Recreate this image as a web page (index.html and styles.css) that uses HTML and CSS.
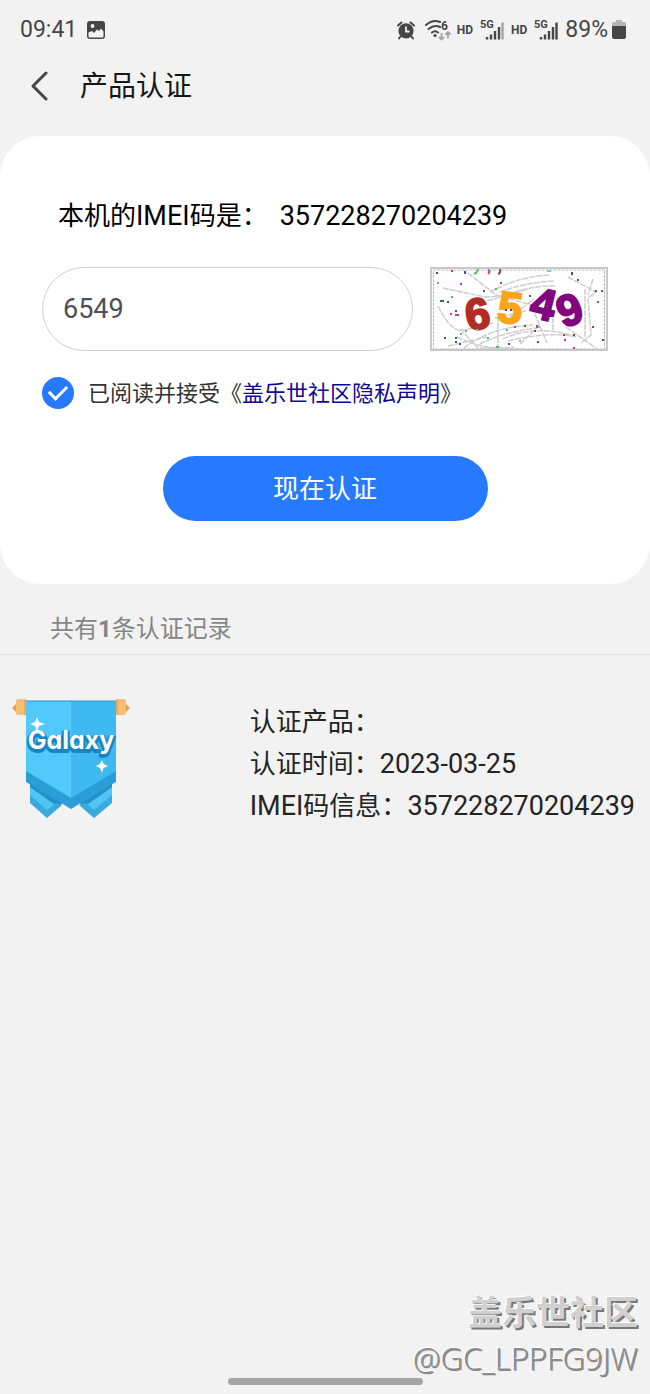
FILE: index.html
```html
<!DOCTYPE html>
<html lang="zh-CN">
<head>
<meta charset="utf-8">
<meta name="viewport" content="width=device-width, initial-scale=1">
<title>产品认证</title>
<link rel="stylesheet" href="styles.css">
</head>
<body>
<div class="status">
  <time class="status-text">09:41</time>
  <svg class="gallery" width="20" height="20" viewBox="0 0 20 20" aria-hidden="true"><rect x="1" y="1" width="18" height="18" rx="3" fill="#464646"/><path d="M2.500 12.500 6 11l2 2 3-3.500 2 1.500 2-2.500 2.500 3V16q0 1.500-1.500 1.500H4Q2.500 17.500 2.500 16Z" fill="#f2f2f2"/><circle cx="6.500" cy="6" r="1.900" fill="#f2f2f2"/></svg>
  <div class="status-icons">
    <svg width="20" height="20" viewBox="0 0 20 20" aria-hidden="true"><g fill="none" stroke="#464646" stroke-width="2" stroke-linecap="round"><path d="M2 5.500 5.500 2.500M18 5.500 14.500 2.500M4.500 16.500 3 18.500M15.500 16.500 17 18.500"/></g><circle cx="10" cy="10.800" r="7.600" fill="#464646"/><path d="M10 6.500V11.500H13.500" fill="none" stroke="#f2f2f2" stroke-width="1.800"/></svg>
    <svg class="wifi" width="28" height="24" viewBox="0 0 28 24" aria-hidden="true"><g fill="none" stroke="#464646" stroke-width="2" stroke-linecap="round"><path d="M2 7Q9 1 16 4M4.500 11Q10 6.500 16 9M8 14.500Q11 12 14 14.500"/></g><circle cx="11" cy="17.500" r="1.600" fill="#464646"/><text x="17" y="12" class="wifi-number">6</text><path d="M17.500 15V21.500M15 19l2.500 2.500L20 19M24 20.500V14M21.500 16.500 24 14l2.500 2.500" fill="none" stroke="#a5a5a5" stroke-width="1.800"/></svg>
    <span class="hd">HD</span>
    <svg width="24" height="22" viewBox="0 0 24 22" aria-hidden="true"><text x="0" y="9" class="net">5G</text><path d="M7 18v2.500M11 15.500v5M15 12v8.500M19 8v12.500" stroke="#464646" stroke-width="2.400"/><path d="M22.500 3.500v17" stroke="#a5a5a5" stroke-width="2.400"/></svg>
    <span class="hd">HD</span>
    <svg width="24" height="22" viewBox="0 0 24 22" aria-hidden="true"><text x="0" y="9" class="net">5G</text><path d="M7 18v2.500M11 15.500v5M15 12v8.500M19 8v12.500M22.500 3.500v17" stroke="#464646" stroke-width="2.400"/></svg>
    <span class="status-text">89%</span>
    <svg class="battery" width="14" height="20" viewBox="0 0 14 20" aria-hidden="true"><path d="M4 0h6v2h2q2 0 2 2v3H0V4q0-2 2-2h2Z" fill="#b4b4b4"/><path d="M0 6h14v11q0 2-2 2H2q-2 0-2-2Z" fill="#464646"/></svg>
  </div>
</div>

<header class="header">
  <button class="back" type="button" aria-label="返回"><svg width="20" height="32" viewBox="0 0 20 32" aria-hidden="true"><path d="M16 2 3 15 16 28" fill="none" stroke="#464646" stroke-width="3" stroke-linecap="round" stroke-linejoin="round"/></svg></button>
  <h1 class="title">产品认证</h1>
</header>

<main>
  <form class="card">
    <p class="imei"><span>本机的<span class="latin">IMEI</span>码是：</span><span class="latin">357228270204239</span></p>
    <div class="code-row">
      <input class="code" type="text" value="6549" aria-label="验证码">
      <svg class="captcha" width="178" height="84" viewBox="0 0 178 84" role="img" aria-label="验证码图片">
        <rect x="1" y="1" width="176" height="82" fill="#fff" stroke="#c8c8c8" stroke-width="2"/>
        <rect x="3.500" y="3" width="171" height="79" fill="none" stroke="#bcbcbc" stroke-dasharray="3 1"/>
        <g fill="none" stroke="#cdcdcd" stroke-width="1.500" stroke-dasharray="6 1">
          <path d="M13 21 55 30 92 28M38 6 66 28 109 40M60 25Q90 9 120 8M70 25Q97 15 124 14M78 27Q105 18 125 19M8 39Q18 60 30 64L63 56M30 62 48 81 94 82M27 70Q55 84 84 80M34 81Q60 60 103 58M50 77Q71 66 105 61M73 72Q104 57 145 69M78 74Q118 64 147 70M138 10 166 25 158 31 161 68 151 76M163 12 158 28M155 22V70M102 40 117 76M123 50V63M90 77 110 58M65 51 96 44M68 49V79M57 34 98 22M136 60 167 82M80 50 104 32M18 79 57 70"/>
        </g>
        <g class="captcha-digits"><text x="35" y="62" fill="#b22d25" stroke="#b22d25" transform="rotate(-10 48 46)">6</text><text x="68" y="56" fill="#faa41a" stroke="#faa41a" transform="rotate(7 80 40)">5</text><text x="101" y="52" fill="#82057f" stroke="#82057f" transform="rotate(14 112 38)">4</text><text x="127" y="58" fill="#82057f" stroke="#82057f" transform="rotate(-20 139 42)">9</text></g>
        <g fill="none" stroke-width="2">
          <path d="M6 6h2M10 34h4M17 35h2M25 44h2M14 71h2M25 71h2M25 75h2M29 77h2M107 75h2M142 5v3M35 4v3M99 29h2M116 39h2M78 77h2M172 73h2M105 63v2M75 43h2M80 43h2" stroke="#39558c"/>
          <path d="M21 4h2M30 17h2M70 16h2M58 3q3 1 0 4M20 47h2M25 48h4M84 60h2M134 73h2M143 81h2M167 35h2M107 58v3" stroke="#c53aa0"/>
          <path d="M7 16h2M21 30h2M65 22h2M30 67h2M44 7q4-2 4-5M35 64h2M66 80h3M76 63h2M57 71h2" stroke="#5bb86b"/>
          <path d="M68 7q3-1 2-5M147 13h2M165 24h2M171 24h2M94 59h2M53 24h2M162 60h2M133 68h2M143 68h2" stroke="#865047"/>
          <path d="M117 4h4M46 63h2M89 74h2M108 60h2" stroke="#73c7de"/>
        </g>
      </svg>
    </div>
    <div class="agreement"><input class="check" type="checkbox" id="agree" checked><label for="agree">已阅读并接受《<a class="privacy" href="#">盖乐世社区隐私声明</a>》</label></div>
    <button class="submit" type="button">现在认证</button>
  </form>

  <section class="records">
    <h2 class="records-title">共有<b class="count">1</b>条认证记录</h2>
    <article class="record">
      <svg class="badge" width="118" height="124" viewBox="0 0 118 124" role="img" aria-label="Galaxy">
        <path d="M0 11 6 5V17ZM118 11 112 5V17Z" fill="#e99e4d"/><path d="M5 2h9v16H5l-1-2V4ZM104 2h9l1 2v12l-1 2h-9Z" fill="#f7bd72"/><path d="M13 3v15M105 3v15" stroke="#e3a45c" stroke-width="1.500"/>
        <path d="M18 82H50V107L35 120 18 105ZM100 82H68V107L82 120 100 105Z" fill="#4fc5f5"/>
        <path d="M18 85 50 106 46 110 18 90ZM100 85 68 106 72 110 100 90Z" fill="#258fc8"/>
        <path d="M18 98 35 113 44 106 50 108 35 121 18 106ZM100 98 82 113 74 106 67 108 82 121 100 106Z" fill="#38aadd"/>
        <path d="M14 4h45v98L14 78Z" fill="#51c9fb"/><path d="M59 4h45v74L59 102Z" fill="#40b8f0"/>
        <path d="M14 74 59 101v11L14 85ZM104 74 59 101v11l45-27Z" fill="#2c9ed7"/><path d="M14 4h90" stroke="#2895cb"/>
        <text x="59" y="54" text-anchor="middle" class="badge-text shade">Galaxy</text><text x="59" y="52" text-anchor="middle" class="badge-text">Galaxy</text>
        <path d="m25 20 2 5 6 2-6 2-2 6-2-6-5-2 5-2ZM90 63l1.500 4 4.500 2-4.500 2-1.500 5-2-5-4-2 4-2Z" fill="#fff"/>
      </svg>
      <div class="details"><p>认证产品：</p><p>认证时间：<span class="latin">2023-03-25</span></p><p><span class="latin">IMEI</span>码信息：<span class="latin">357228270204239</span></p></div>
    </article>
  </section>
</main>

<div class="watermark"><span class="community">盖乐世社区</span><span class="user">@GC_LPPFG9JW</span></div>
<div class="home-bar"></div>
</body>
</html>
```

FILE: styles.css
```css
* { box-sizing: border-box; }
body {
  margin: 0;
  min-height: 100vh;
  display: flex;
  flex-direction: column;
  position: relative;
  background: #f2f2f2;
  color: #242424;
  font-family: Roboto, "Noto Sans CJK SC", sans-serif;
  font-size: 26px;
}
p, h1, h2 { margin: 0; font-weight: 400; }
main { flex: 1; }
.latin { font-size: 27px; }

.status { height: 60px; padding: 0 24px 0 20px; display: flex; align-items: center; gap: 9px; color: #464646; }
.status-text { font-size: 23px; line-height: 28px; }
.status-icons { margin-left: auto; display: flex; align-items: center; gap: 7px; }
.wifi { margin: 0 -2px 0 1px; }
.hd { font-size: 12px; font-weight: 700; line-height: 16px; }
.net { font: 700 11px Roboto, sans-serif; fill: #464646; }
.wifi-number { font: 700 12px Roboto, sans-serif; fill: #464646; }
.battery { margin-left: -3px; }

.header { height: 76px; padding: 0 30px 22px; display: flex; align-items: center; gap: 30px; }
.back { width: 20px; height: 32px; padding: 0; border: 0; background: none; display: flex; }
.title { font-size: 28px; line-height: 36px; color: #161616; }

.card { padding: 61px 42px 63px; border-radius: 40px; background: #fff; }
.imei { padding-left: 16px; display: flex; align-items: center; gap: 12px; line-height: 38px; color: #000; }
.code-row { margin-top: 32px; display: flex; gap: 17px; }
.code { flex: 1; min-width: 0; height: 84px; padding: 0 20px; border: 1px solid #d0d0d0; border-radius: 42px; background: #fff; color: #4c4f56; font: 27px Roboto, sans-serif; outline: none; }
.captcha { flex: none; }
.captcha-digits { font: 700 44px "Liberation Sans", sans-serif; stroke-width: 2px; }
.agreement { margin-top: 25px; display: flex; align-items: center; gap: 14px; font-size: 22px; line-height: 32px; color: #333; }
.agreement label { padding-top: 2px; }
.check { appearance: none; flex: none; width: 32px; height: 32px; margin: 0; border-radius: 50%; background: #267aff; display: grid; place-items: center; }
.check:checked::before { content: ""; box-sizing: border-box; width: 18px; height: 11px; margin-bottom: 5px; border: solid #fff; border-width: 0 0 3px 3px; transform: rotate(-45deg); }
.privacy { color: #0f0694; text-decoration: none; }
.submit { display: block; width: 325px; max-width: 100%; height: 65px; margin: 46px auto 0; padding: 0 0 4px; border: 0; border-radius: 33px; background: #267aff; color: #fff; font: 26px "Noto Sans CJK SC", sans-serif; }

.records-title { padding: 27px 50px 7px; border-bottom: 1px solid #e2e2e2; font-size: 24px; line-height: 36px; color: #858585; }
.record { padding: 42px 15px 0 12px; display: flex; justify-content: space-between; }
.badge { flex: none; }
.badge-text { font: 700 25px Inter, sans-serif; font-feature-settings: "cv11"; fill: #fff; }
.shade { fill: #1685c6; stroke: #1685c6; stroke-width: 4px; stroke-linejoin: round; }
.details { padding-top: 4px; line-height: 42px; }

.watermark { position: absolute; right: 12px; bottom: 14px; display: flex; flex-direction: column; align-items: flex-end; color: #d0d0d0; text-shadow: -1px -1px 1px #fff, 2px 2px 0 #777; }
.community { font-size: 34px; font-weight: 700; line-height: 46px; }
.user { font-family: "Open Sans", sans-serif; font-size: 31px; font-weight: 300; line-height: 44px; color: #8c8c8c; text-shadow: -1px -1px 1px #fff, 1px 1px 0 #858585; }
.home-bar { width: 30%; height: 7px; margin: 0 auto 9px; border-radius: 4px; background: #a6a6a6; }
```
